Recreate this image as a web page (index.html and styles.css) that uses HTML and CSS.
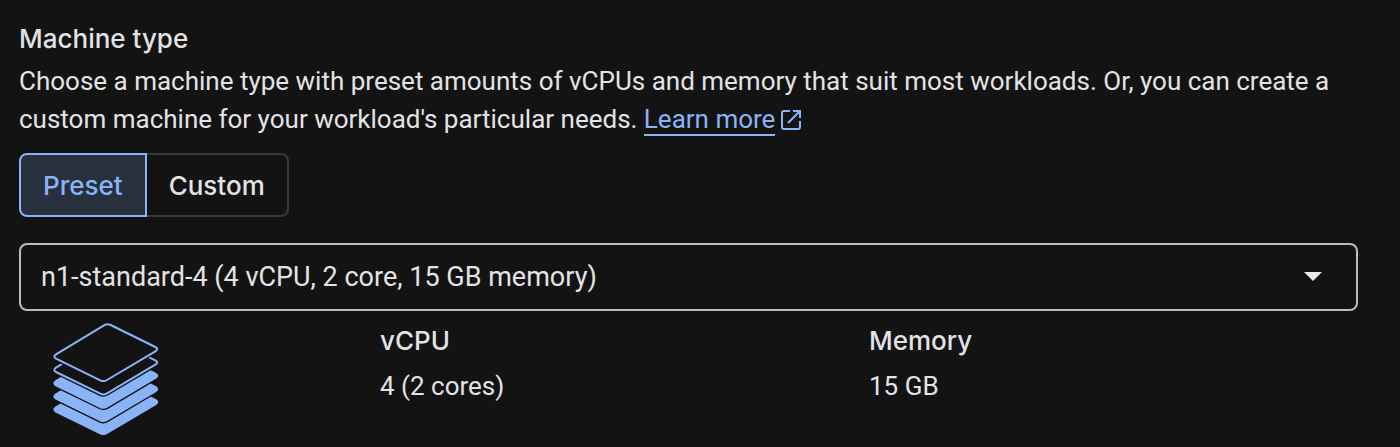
FILE: index.html
```html
<!DOCTYPE html>
<html lang="en">
<head>
  <meta charset="UTF-8" />
  <title>Machine type</title>
  <meta name="viewport" content="width=device-width, initial-scale=1.0" />
  <link rel="stylesheet" href="styles.css">
</head>
<body>

  <main class="machine">
    <h2 id="machineTitle">Machine type</h2>
    <p class="description">
      Choose a machine type with preset amounts of vCPUs and memory that suit most workloads. Or, you can create a custom machine for your workload's particular needs.
      <a href="#" class="learn-more"><span>Learn more</span><svg class="external" viewBox="0 0 20 20" aria-hidden="true"><path d="M9 1H3Q1 1 1 3V17Q1 19 3 19H17Q19 19 19 17V11M12 1H19V8M18 2L7 13" /></svg></a>
    </p>

    <div class="toggle" role="group" aria-labelledby="machineTitle">
      <button type="button" class="active" aria-pressed="true">Preset</button>
      <button type="button" aria-pressed="false">Custom</button>
    </div>

    <div class="select-wrap">
      <select id="machine" name="machine" aria-labelledby="machineTitle">
        <option>n1-standard-4 (4 vCPU, 2 core, 15 GB memory)</option>
      </select>
      <svg class="arrow" viewBox="0 0 18 9" aria-hidden="true"><path d="M0 0H18L9 9Z" /></svg>
    </div>

    <div class="specs">
      <svg class="stack" viewBox="66 36 324 342" aria-hidden="true">
        <defs>
          <path id="layer" d="M222 46Q232 40 242 45L376 111Q388 117 376 124L231 210Q221 216 211 211L78 146Q68 140 78 133Z" />
        </defs>
        <use href="#layer" y="159" class="solid" />
        <use href="#layer" y="120" class="gap" />
        <use href="#layer" y="120" class="solid" />
        <use href="#layer" y="80" class="gap" />
        <use href="#layer" y="80" class="solid" />
        <use href="#layer" y="40" class="gap" />
        <use href="#layer" y="40" class="outline" />
        <use href="#layer" class="gap" />
        <use href="#layer" class="outline" />
      </svg>
      <div class="spec">
        <h3>vCPU</h3>
        <p>4 (2 cores)</p>
      </div>
      <div class="spec">
        <h3>Memory</h3>
        <p>15 GB</p>
      </div>
    </div>
  </main>

</body>
</html>
```
FILE: styles.css
```css
body {
  margin: 0;
  font-family: Roboto, sans-serif;
  font-size: 26px;
  line-height: 38px;
  background: #131313;
  color: #e3e3e6;
}

.machine {
  padding: 20px 42px 12px 19px;
}

h2,
h3 {
  margin: 0;
  font-family: Inter, sans-serif;
  font-size: 26px;
  font-weight: 500;
}

p {
  margin: 0;
}

.description {
  margin-top: 4px;
}

.learn-more {
  color: #8ab4f8;
  text-decoration: none;
  white-space: nowrap;
}

.learn-more span {
  border-bottom: 2px solid #8ab4f8;
}

.external {
  width: 20px;
  height: 20px;
  margin-left: 6px;
  vertical-align: -2px;
  fill: none;
  stroke: #8ab4f8;
  stroke-width: 2;
}

.toggle {
  display: flex;
  margin-top: 15px;
}

button {
  height: 64px;
  padding: 0 22px;
  border: 2px solid #37393b;
  border-left: none;
  border-radius: 0 8px 8px 0;
  background: transparent;
  color: #e3e3e6;
  font-family: Inter, sans-serif;
  font-size: 26px;
  font-weight: 500;
  cursor: pointer;
}

button.active {
  border: 2px solid #8ab4f8;
  border-radius: 8px 0 0 8px;
  background: #282f3d;
  color: #8ab4f8;
}

.select-wrap {
  position: relative;
  margin-top: 26px;
}

select {
  display: block;
  width: 100%;
  height: 68px;
  padding: 0 64px 0 20px;
  border: 2px solid #b9bcc0;
  border-radius: 8px;
  background: transparent;
  color: #e3e3e6;
  font: inherit;
  font-size: 27px;
  appearance: none;
}

.arrow {
  position: absolute;
  top: 29px;
  right: 36px;
  width: 18px;
  height: 9px;
  fill: #e8eaed;
  pointer-events: none;
}

.specs {
  display: grid;
  grid-template-columns: 361px 1fr 1fr;
  margin-top: 11px;
}

.stack {
  width: 108px;
  height: 114px;
  margin-left: 33px;
}

.solid {
  fill: #8ab4f8;
  stroke: #8ab4f8;
  stroke-width: 6;
}

.gap {
  fill: #131313;
  stroke: #131313;
  stroke-width: 14;
}

.outline {
  fill: #131313;
  stroke: #8ab4f8;
  stroke-width: 6;
}

.spec p {
  margin-top: 7px;
}
```
